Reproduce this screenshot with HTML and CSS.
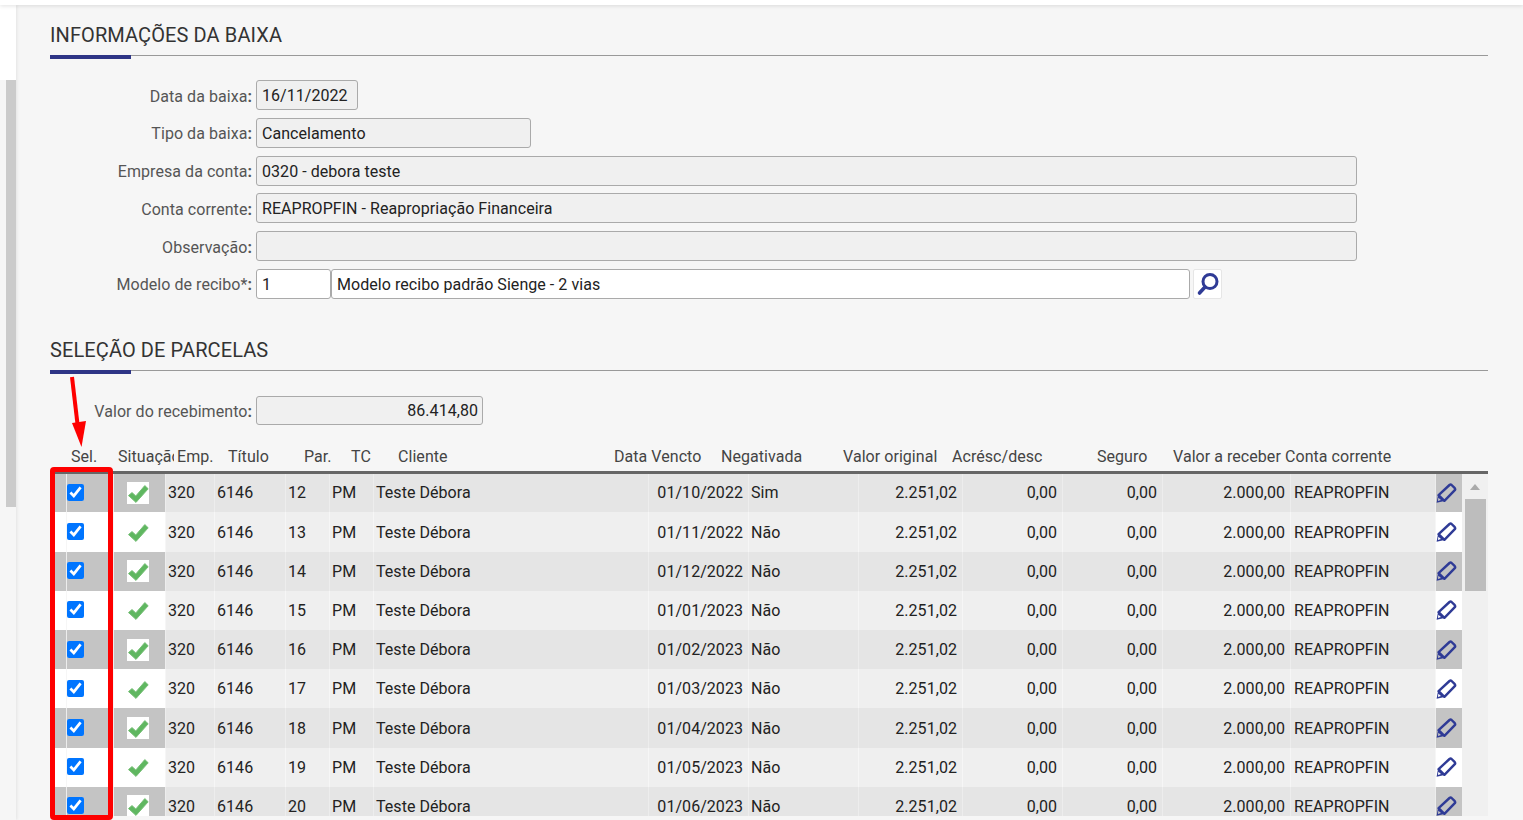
FILE: index.html
```html
<!DOCTYPE html>
<html lang="pt-BR">
<head>
<meta charset="utf-8">
<title>Informações da baixa</title>
<link rel="stylesheet" href="styles.css">
</head>
<body>
<svg class="defs" width="0" height="0" aria-hidden="true">
  <symbol id="i-check" viewBox="0 0 22 22">
    <path d="M1.5 13.6 L5 10.6 L8.8 14 L17.8 3.6 L21.2 6.8 L9 20.4 Z" fill="#5fb760" stroke="#78bf78" stroke-width="1" stroke-linejoin="round"/>
  </symbol>
  <symbol id="i-pen" viewBox="0 0 22 22">
    <path d="M3.6 13.2 L14.5 3 Q15.6 2.2 16.6 3 L19.8 6.2 Q20.6 7.2 19.8 8.2 L9.4 18.8 Z" fill="none" stroke="#2f3b96" stroke-width="2.4" stroke-linejoin="round"/>
    <path d="M1.6 20.8 L3 13 L9.6 19 Z M3.4 15.8 L2.9 18.9 L6 18 Z" fill="#2f3b96" fill-rule="evenodd"/>
  </symbol>
</svg>
<div class="topbar"></div>
<div class="layout">
  <aside class="rail"><div class="rail-strip"></div></aside>
  <main class="content">
    <section class="info">
      <h2 class="section-title">INFORMAÇÕES DA BAIXA</h2>
      <div class="section-bar"></div>
      <div class="form">
        <div class="form-row"><label class="form-label">Data da baixa<b>:</b></label><div class="field f-date">16/11/2022</div></div>
        <div class="form-row"><label class="form-label">Tipo da baixa<b>:</b></label><div class="field f-type">Cancelamento</div></div>
        <div class="form-row"><label class="form-label">Empresa da conta<b>:</b></label><div class="field f-wide">0320 - debora teste</div></div>
        <div class="form-row"><label class="form-label">Conta corrente<b>:</b></label><div class="field f-wide">REAPROPFIN - Reapropriação Financeira</div></div>
        <div class="form-row"><label class="form-label">Observação<b>:</b></label><div class="field f-wide"></div></div>
        <div class="form-row">
          <label class="form-label">Modelo de recibo*<b>:</b></label>
          <div class="field f-code editable">1</div>
          <div class="field f-name editable">Modelo recibo padrão Sienge - 2 vias</div>
          <button class="search-btn" type="button" aria-label="Buscar">
            <svg width="24" height="24" viewBox="0 0 24 24"><circle cx="14" cy="9.5" r="7" fill="none" stroke="#2f3b96" stroke-width="3"/><path d="M9 15 L3.5 21" stroke="#2f3b96" stroke-width="3.6" stroke-linecap="round"/></svg>
          </button>
        </div>
      </div>
    </section>
    <section class="parcelas">
      <h2 class="section-title">SELEÇÃO DE PARCELAS</h2>
      <div class="section-bar"></div>
      <div class="form-row total-row"><label class="form-label">Valor do recebimento<b>:</b></label><div class="field f-total">86.414,80</div></div>
      <div class="thead">
        <span class="h-sel">Sel.</span><span class="h-sit">Situação</span><span class="h-emp">Emp.</span><span class="h-tit">Título</span><span class="h-par">Par.</span><span class="h-tc">TC</span><span class="h-cli">Cliente</span><span class="h-dat">Data Vencto</span><span class="h-neg">Negativada</span><span class="h-ori">Valor original</span><span class="h-acr">Acrésc/desc</span><span class="h-seg">Seguro</span><span class="h-rec">Valor a receber</span><span class="h-con">Conta corrente</span>
      </div>
      <div class="tbody">
        <div class="rows">
          <div class="row"><span class="c0"></span><span class="c-sel"><input type="checkbox" checked></span><span class="c-sit"><svg class="check"><use href="#i-check"/></svg></span><span>320</span><span>6146</span><span>12</span><span>PM</span><span>Teste Débora</span><span class="num">01/10/2022</span><span>Sim</span><span class="num">2.251,02</span><span class="num">0,00</span><span class="num">0,00</span><span class="num">2.000,00</span><span class="c-conta">REAPROPFIN</span><span class="c-edit"><svg class="pen"><use href="#i-pen"/></svg></span></div>
          <div class="row"><span class="c0"></span><span class="c-sel"><input type="checkbox" checked></span><span class="c-sit"><svg class="check"><use href="#i-check"/></svg></span><span>320</span><span>6146</span><span>13</span><span>PM</span><span>Teste Débora</span><span class="num">01/11/2022</span><span>Não</span><span class="num">2.251,02</span><span class="num">0,00</span><span class="num">0,00</span><span class="num">2.000,00</span><span class="c-conta">REAPROPFIN</span><span class="c-edit"><svg class="pen"><use href="#i-pen"/></svg></span></div>
          <div class="row"><span class="c0"></span><span class="c-sel"><input type="checkbox" checked></span><span class="c-sit"><svg class="check"><use href="#i-check"/></svg></span><span>320</span><span>6146</span><span>14</span><span>PM</span><span>Teste Débora</span><span class="num">01/12/2022</span><span>Não</span><span class="num">2.251,02</span><span class="num">0,00</span><span class="num">0,00</span><span class="num">2.000,00</span><span class="c-conta">REAPROPFIN</span><span class="c-edit"><svg class="pen"><use href="#i-pen"/></svg></span></div>
          <div class="row"><span class="c0"></span><span class="c-sel"><input type="checkbox" checked></span><span class="c-sit"><svg class="check"><use href="#i-check"/></svg></span><span>320</span><span>6146</span><span>15</span><span>PM</span><span>Teste Débora</span><span class="num">01/01/2023</span><span>Não</span><span class="num">2.251,02</span><span class="num">0,00</span><span class="num">0,00</span><span class="num">2.000,00</span><span class="c-conta">REAPROPFIN</span><span class="c-edit"><svg class="pen"><use href="#i-pen"/></svg></span></div>
          <div class="row"><span class="c0"></span><span class="c-sel"><input type="checkbox" checked></span><span class="c-sit"><svg class="check"><use href="#i-check"/></svg></span><span>320</span><span>6146</span><span>16</span><span>PM</span><span>Teste Débora</span><span class="num">01/02/2023</span><span>Não</span><span class="num">2.251,02</span><span class="num">0,00</span><span class="num">0,00</span><span class="num">2.000,00</span><span class="c-conta">REAPROPFIN</span><span class="c-edit"><svg class="pen"><use href="#i-pen"/></svg></span></div>
          <div class="row"><span class="c0"></span><span class="c-sel"><input type="checkbox" checked></span><span class="c-sit"><svg class="check"><use href="#i-check"/></svg></span><span>320</span><span>6146</span><span>17</span><span>PM</span><span>Teste Débora</span><span class="num">01/03/2023</span><span>Não</span><span class="num">2.251,02</span><span class="num">0,00</span><span class="num">0,00</span><span class="num">2.000,00</span><span class="c-conta">REAPROPFIN</span><span class="c-edit"><svg class="pen"><use href="#i-pen"/></svg></span></div>
          <div class="row"><span class="c0"></span><span class="c-sel"><input type="checkbox" checked></span><span class="c-sit"><svg class="check"><use href="#i-check"/></svg></span><span>320</span><span>6146</span><span>18</span><span>PM</span><span>Teste Débora</span><span class="num">01/04/2023</span><span>Não</span><span class="num">2.251,02</span><span class="num">0,00</span><span class="num">0,00</span><span class="num">2.000,00</span><span class="c-conta">REAPROPFIN</span><span class="c-edit"><svg class="pen"><use href="#i-pen"/></svg></span></div>
          <div class="row"><span class="c0"></span><span class="c-sel"><input type="checkbox" checked></span><span class="c-sit"><svg class="check"><use href="#i-check"/></svg></span><span>320</span><span>6146</span><span>19</span><span>PM</span><span>Teste Débora</span><span class="num">01/05/2023</span><span>Não</span><span class="num">2.251,02</span><span class="num">0,00</span><span class="num">0,00</span><span class="num">2.000,00</span><span class="c-conta">REAPROPFIN</span><span class="c-edit"><svg class="pen"><use href="#i-pen"/></svg></span></div>
          <div class="row"><span class="c0"></span><span class="c-sel"><input type="checkbox" checked></span><span class="c-sit"><svg class="check"><use href="#i-check"/></svg></span><span>320</span><span>6146</span><span>20</span><span>PM</span><span>Teste Débora</span><span class="num">01/06/2023</span><span>Não</span><span class="num">2.251,02</span><span class="num">0,00</span><span class="num">0,00</span><span class="num">2.000,00</span><span class="c-conta">REAPROPFIN</span><span class="c-edit"><svg class="pen"><use href="#i-pen"/></svg></span></div>
        </div>
        <div class="scrollbar"><div class="scroll-up"></div><div class="scroll-thumb"></div></div>
      </div>
    </section>
  </main>
</div>
<svg class="arrow" width="30" height="80" viewBox="0 0 30 80" aria-hidden="true">
  <path d="M7 1 L12.5 48" stroke="#fe0000" stroke-width="4" fill="none"/>
  <path d="M7 47 L21 45 L16.5 71 Z" fill="#fe0000"/>
</svg>
<div class="highlight"></div>
</body>
</html>
```
FILE: styles.css
```css
* { box-sizing: border-box; }
html, body { margin: 0; padding: 0; height: 820px; overflow: hidden; }
body {
  position: relative;
  background: #f6f6f6;
  font-family: Roboto, "Liberation Sans", sans-serif;
  font-size: 16px;
  letter-spacing: .05px;
  color: #222;
}
.defs { position: absolute; }
.topbar {
  height: 5px;
  background: #fff;
  box-shadow: 0 1px 4px rgba(0, 0, 0, .12);
  position: relative;
  z-index: 2;
}
.layout { display: flex; height: 815px; }
.rail {
  width: 16px;
  flex: none;
  background: linear-gradient(#fff 75px, #f6f6f6 75px);
  box-shadow: 1px 0 3px rgba(0, 0, 0, .08);
  padding: 75px 0 0 6px;
  position: relative;
  z-index: 1;
}
.rail-strip { width: 10px; height: 427px; background: #cbcbcb; }
.content { flex: 1; padding: 0 35px 0 34px; min-width: 0; }
.section-title {
  margin: 0;
  padding-top: 15px;
  font-weight: 400;
  font-size: 20px;
  letter-spacing: .1px;
  line-height: 30px;
  height: 51px;
  color: #333;
  border-bottom: 1px solid #999;
}
.section-bar { width: 81px; height: 4px; margin-top: -1px; background: #2e3586; }

.form { display: flex; flex-direction: column; gap: 7.8px; margin-top: 21px; }
.form-row { display: flex; align-items: center; height: 30px; }
.form-label {
  width: 206px;
  flex: none;
  padding: 2px 4px 0 0;
  text-align: right;
  color: #555;
}
.form-label b { font-weight: 700; color: #555; }
.field {
  height: 30px;
  line-height: 29px;
  padding: 0 5px;
  background: #f0f0f0;
  border: 1px solid #aaa;
  border-radius: 3px;
  color: #222;
  white-space: nowrap;
}
.f-date { width: 102px; }
.f-type { width: 275px; }
.f-wide { width: 1101px; }
.f-code { width: 75px; }
.f-name { width: 859px; }
.editable { background: #fff; }
.f-total { width: 227px; height: 29px; line-height: 27px; text-align: right; padding-right: 4px; }
.search-btn {
  width: 29px;
  height: 30px;
  margin-left: 3px;
  padding: 0;
  display: flex;
  align-items: center;
  justify-content: center;
  background: #fff;
  border: 1px solid #e6e6e6;
  border-radius: 2px;
}

.parcelas { margin-top: 21px; }
.total-row { margin-top: 22px; }
.thead {
  position: relative;
  height: 48px;
  border-bottom: 3px solid #666;
  color: #444;
  display: grid;
  grid-template-columns: 21px 47px 59px 51px 76px 47px 47px 216px 107px 122px 109px 145px 76px 112px 1fr;
  align-items: center;
  padding-top: 16px;
  white-space: nowrap;
}
.thead span { grid-row: 1; }
.h-sel { grid-column: 2; }
.h-sit { grid-column: 3; width: 56px; overflow: hidden; }
.h-emp { grid-column: 4; }
.h-tit { grid-column: 5; }
.h-par { grid-column: 6; }
.h-tc { grid-column: 7; }
.h-cli { grid-column: 8; }
.h-dat { grid-column: 9; }
.h-neg { grid-column: 10; }
.h-ori { grid-column: 11; }
.h-acr { grid-column: 12; }
.h-seg { grid-column: 13; }
.h-rec { grid-column: 14; }
.h-con { grid-column: 15; }

.tbody { display: flex; height: 342px; overflow: hidden; background: #f0f0f0; }
.rows { width: 1412px; flex: none; }
.row {
  display: grid;
  grid-template-columns: 16px 47px 52px 49px 71px 44px 44px 275px 100px 110px 104px 100px 100px 128px 145px 27px;
  height: 39.2px;
  background: #efefef;
}
.row:first-child { height: 38.5px; }
.row:nth-child(odd) { background: #e5e5e5; }
.row > span {
  display: flex;
  align-items: center;
  padding: 0 2px;
  border-left: 1px solid #f6f6f6;
  white-space: nowrap;
}
.row:first-child > span { padding-bottom: 1px; }
.row:nth-child(odd) > span { border-left-color: #ededed; }
.row > .num { justify-content: flex-end; padding-right: 5px; }
.row > .c-conta { padding-left: 3px; }
.row > .c0, .row > .c-sel, .row > .c-sit, .row > .c-edit { background: #fff; padding: 0; }
.row:nth-child(odd) > .c0, .row:nth-child(odd) > .c-sel, .row:nth-child(odd) > .c-sit, .row:nth-child(odd) > .c-edit { background: #c4c4c4; }
.c-sel input { width: 17px; height: 17px; margin: 0 0 1px 0; }
.check { width: 22px; height: 22px; margin-left: 13px; }
.row:nth-child(odd) .check { background: #fff; }
.pen { width: 22px; height: 22px; margin-left: -1px; }
.scrollbar { width: 26px; padding-left: 3px; }
.scroll-up {
  width: 0;
  height: 0;
  margin: 10px 0 9px 5px;
  border: 5.5px solid transparent;
  border-top: 0;
  border-bottom: 6px solid #aaa;
}
.scroll-thumb { width: 21px; height: 92px; background: #bdbdbd; }

.arrow { position: absolute; left: 65px; top: 376px; }
.highlight {
  position: absolute;
  left: 50px;
  top: 467px;
  width: 63px;
  height: 353px;
  border: 5px solid #fe0000;
  border-radius: 4px;
}
```
